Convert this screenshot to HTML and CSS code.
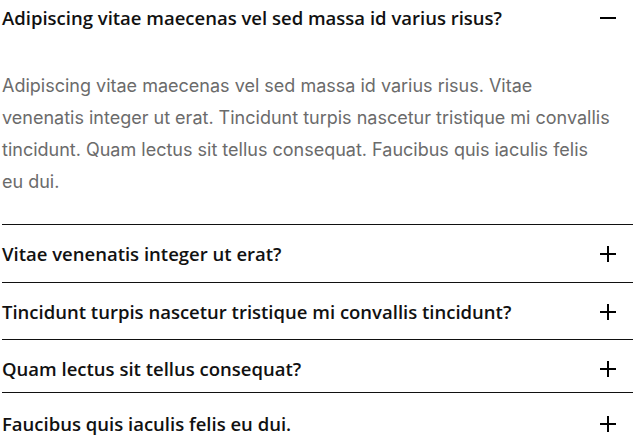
FILE: index.html
```html
<!DOCTYPE html>
<html lang="en">
<head>
<meta charset="utf-8">
<title>FAQ</title>
<link rel="stylesheet" href="styles.css">
</head>
<body>
<div class="faq">
  <div class="item open">
    <div class="q">
      <span class="q-text">Adipiscing vitae maecenas vel sed massa id varius risus?</span>
      <svg class="icon" viewBox="0 0 16 16" width="16" height="16"><path d="M0 8H16" stroke="#000" stroke-width="2"/></svg>
    </div>
    <p class="a">Adipiscing vitae maecenas vel sed massa id varius risus. Vitae venenatis integer ut erat. Tincidunt turpis nascetur tristique mi convallis tincidunt. Quam lectus sit tellus consequat. Faucibus quis iaculis felis eu dui.</p>
  </div>
  <div class="item">
    <div class="q">
      <span class="q-text">Vitae venenatis integer ut erat?</span>
      <svg class="icon" viewBox="0 0 16 16" width="16" height="16"><path d="M0 8H16M8 0V16" stroke="#000" stroke-width="2"/></svg>
    </div>
  </div>
  <div class="item mid">
    <div class="q">
      <span class="q-text">Tincidunt turpis nascetur tristique mi convallis tincidunt?</span>
      <svg class="icon" viewBox="0 0 16 16" width="16" height="16"><path d="M0 8H16M8 0V16" stroke="#000" stroke-width="2"/></svg>
    </div>
  </div>
  <div class="item short">
    <div class="q">
      <span class="q-text">Quam lectus sit tellus consequat?</span>
      <svg class="icon" viewBox="0 0 16 16" width="16" height="16"><path d="M0 8H16M8 0V16" stroke="#000" stroke-width="2"/></svg>
    </div>
  </div>
  <div class="item last">
    <div class="q">
      <span class="q-text">Faucibus quis iaculis felis eu dui.</span>
      <svg class="icon" viewBox="0 0 16 16" width="16" height="16"><path d="M0 8H16M8 0V16" stroke="#000" stroke-width="2"/></svg>
    </div>
  </div>
</div>
</body>
</html>
```
FILE: styles.css
```css
html, body {
  margin: 0;
  padding: 0;
  background: #fff;
}
.faq {
  width: 633px;
  padding-left: 2px;
  box-sizing: border-box;
}
.item {
  border-top: 1.5px solid #111;
}
.item:first-child {
  border-top: none;
}
.q {
  display: flex;
  align-items: center;
  justify-content: space-between;
  padding: 18px 17px 17px 0;
  font-family: "Open Sans", sans-serif;
  font-weight: 600;
  font-size: 18.5px;
  line-height: 22px;
  color: #111;
}
.item.mid .q {
  padding-bottom: 16px;
}
.item.short .q {
  padding-bottom: 12px;
}
.item.last .q {
  padding-top: 20px;
  padding-bottom: 0;
}
.item.open .q {
  padding-top: 7px;
  padding-bottom: 0;
}
.icon {
  flex: none;
  display: block;
}
.a {
  margin: 41px 0 0;
  padding-bottom: 26px;
  max-width: 611px;
  font-family: Inter, sans-serif;
  font-size: 18px;
  line-height: 32px;
  color: #6b6b6b;
}
```
